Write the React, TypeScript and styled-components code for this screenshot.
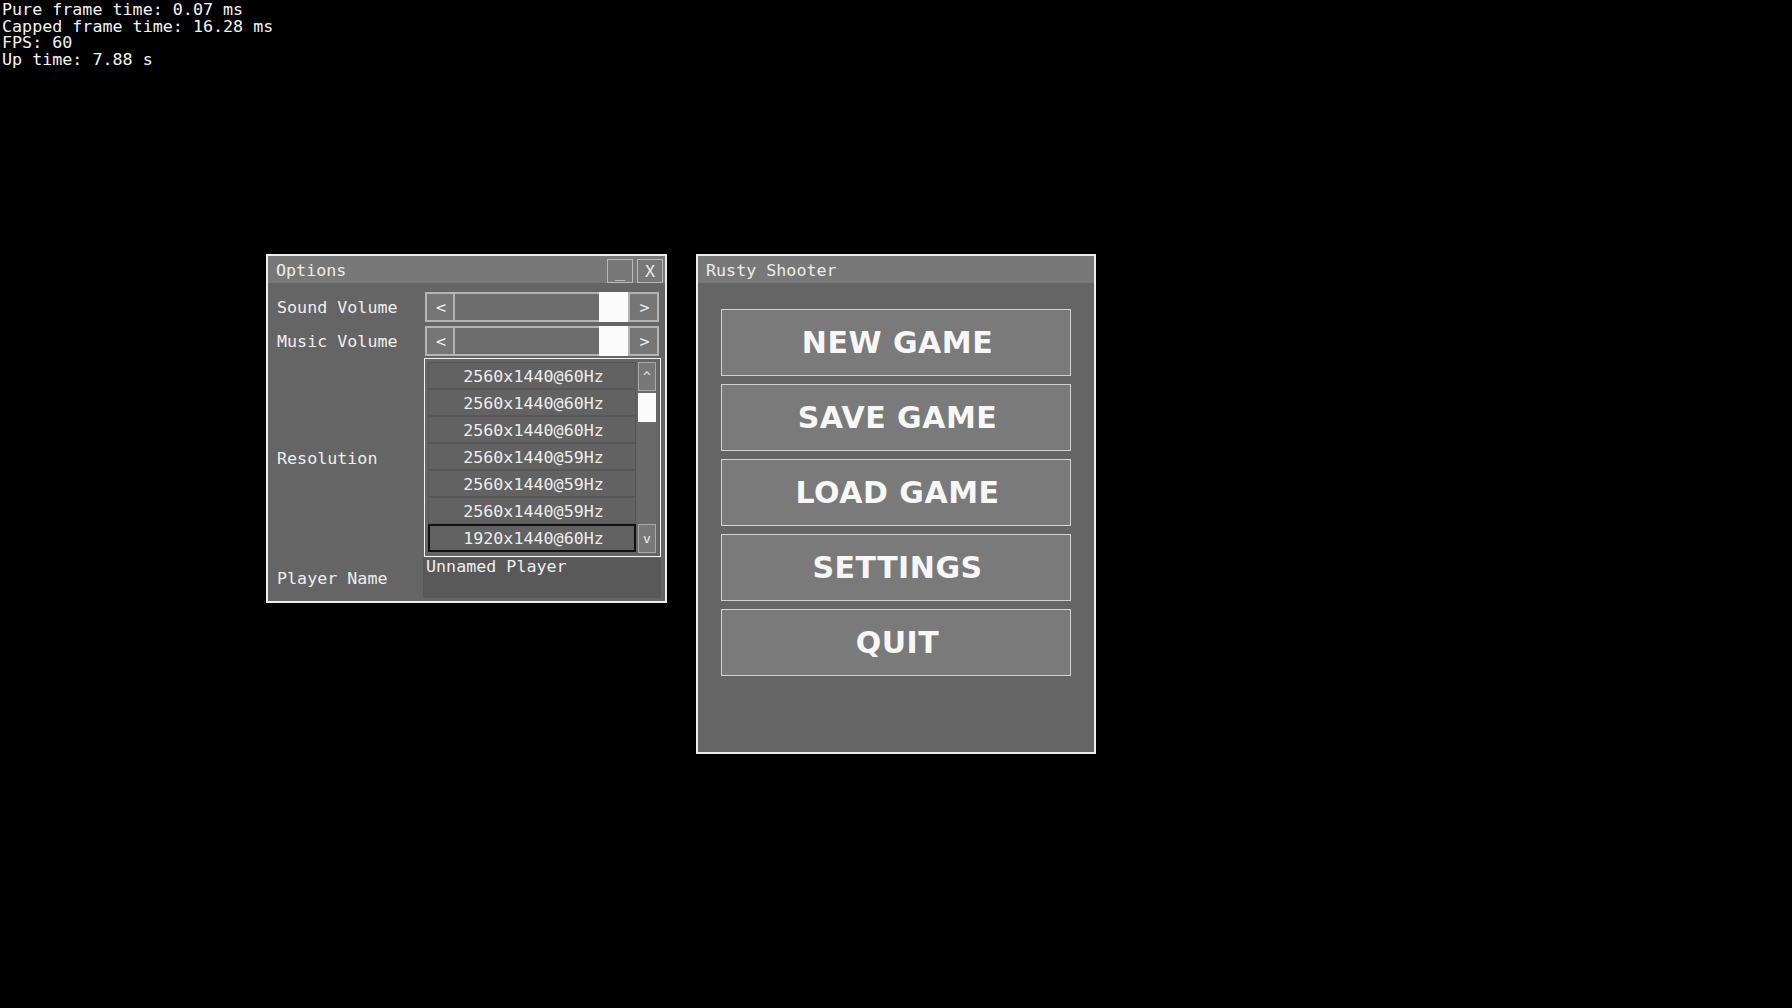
import React from 'react';
import styled, { createGlobalStyle } from 'styled-components';

const Global = createGlobalStyle`
  html, body { margin: 0; padding: 0; background: #000; }
  body {
    width: 1792px;
    height: 1008px;
    overflow: hidden;
    font-family: "DejaVu Sans Mono", "Liberation Mono", monospace;
  }
`;

const Desktop = styled.div`
  position: relative;
  width: 1792px;
  height: 1008px;
  background: #000;
`;

const Stats = styled.div`
  padding: 1px 0 0 2px;
  color: #f4f4f4;
  font-size: 16.7px;
  line-height: 16.6px;
  white-space: pre;
`;

const Window = styled.div<{ $x: number; $y: number; $w: number; $h: number }>`
  position: absolute;
  left: ${(p) => p.$x}px;
  top: ${(p) => p.$y}px;
  width: ${(p) => p.$w}px;
  height: ${(p) => p.$h}px;
  box-sizing: border-box;
  border: 2px solid #ededed;
  background: #656565;
  display: flex;
  flex-direction: column;
`;

const TitleBar = styled.div`
  height: 27px;
  flex-shrink: 0;
  background: #787878;
  display: flex;
  align-items: center;
  padding: 0 2px 0 8px;
  color: #ececec;
  font-size: 16.7px;
`;

const Title = styled.span`
  flex: 1;
`;

const TitleButton = styled.div`
  width: 26px;
  height: 24px;
  margin: 2px 0 0 4px;
  box-sizing: border-box;
  border: 1px solid #b8b8b8;
  display: flex;
  align-items: center;
  justify-content: center;
  color: #ececec;
  font-size: 16.7px;
`;

const OptionsBody = styled.div`
  flex: 1;
  display: flex;
  flex-direction: column;
  padding: 9px 4px 3px 9px;
`;

const Row = styled.div<{ $mt?: number }>`
  display: flex;
  align-items: center;
  margin-top: ${(p) => p.$mt ?? 0}px;
`;

const Label = styled.div`
  width: 146px;
  flex-shrink: 0;
  color: #efefef;
  font-size: 16.7px;
`;

const Slider = styled.div`
  display: flex;
  width: 234px;
  height: 30px;
  margin-left: 2px;
`;

const ArrowButton = styled.div<{ $w: number }>`
  width: ${(p) => p.$w}px;
  box-sizing: border-box;
  border: 2px solid #b4b4b4;
  background: #767676;
  display: flex;
  align-items: center;
  justify-content: center;
  padding-left: 2px;
  color: #efefef;
  font-size: 16.7px;
`;

const Track = styled.div`
  flex: 1;
  display: flex;
  justify-content: flex-end;
  box-sizing: border-box;
  border-top: 2px solid #b4b4b4;
  border-bottom: 2px solid #b4b4b4;
  background: #6d6d6d;
`;

const Thumb = styled.div`
  width: 29px;
  margin: -2px 0;
  background: #fbfbfb;
`;

const ListBox = styled.div`
  width: 237px;
  height: 199px;
  margin-left: 1px;
  box-sizing: border-box;
  border: 1px solid #f4f4f4;
  padding: 3px 4px 3px 3px;
  display: flex;
  gap: 2px;
`;

const Items = styled.div`
  width: 208px;
  display: flex;
  flex-direction: column;
`;

const Item = styled.div<{ $selected?: boolean }>`
  height: ${(p) => (p.$selected ? 28 : 27)}px;
  box-sizing: border-box;
  border: ${(p) => (p.$selected ? '2px solid #111' : '1px solid #575757')};
  background: #626262;
  display: flex;
  align-items: center;
  justify-content: center;
  padding-left: 3px;
  color: #ededed;
  font-size: 16.7px;
`;

const ScrollBar = styled.div`
  width: 18px;
  display: flex;
  flex-direction: column;
`;

const ScrollButton = styled.div`
  height: 29px;
  flex-shrink: 0;
  box-sizing: border-box;
  border: 1px solid #a9a9a9;
  background: #787878;
  display: flex;
  align-items: center;
  justify-content: center;
  color: #eeeeee;
  font-size: 13px;
`;

const ScrollTrack = styled.div`
  flex: 1;
  background: #6a6a6a;
  padding-top: 2px;
`;

const ScrollThumb = styled.div`
  height: 29px;
  background: #fbfbfb;
`;

const TextBox = styled.div`
  width: 238px;
  height: 40px;
  box-sizing: border-box;
  background: #595959;
  padding: 0 2px 0 3px;
  color: #efefef;
  font-size: 16.7px;
  line-height: 17px;
`;

const MenuBody = styled.div`
  flex: 1;
  display: flex;
  flex-direction: column;
  gap: 8px;
  padding: 26px 0 0 23px;
`;

const MenuButton = styled.div`
  width: 350px;
  height: 67px;
  box-sizing: border-box;
  border: 1px solid #d2d2d2;
  background: #7a7a7a;
  display: flex;
  align-items: center;
  justify-content: center;
  padding-left: 3px;
  color: #f7f7f7;
  font-family: "DejaVu Sans", "Liberation Sans", sans-serif;
  font-weight: 700;
  font-size: 30px;
  letter-spacing: 0.5px;
`;

const resolutions = [
  '2560x1440@60Hz',
  '2560x1440@60Hz',
  '2560x1440@60Hz',
  '2560x1440@59Hz',
  '2560x1440@59Hz',
  '2560x1440@59Hz',
  '1920x1440@60Hz',
];

const VolumeSlider = () => (
  <Slider>
    <ArrowButton $w={30}>&lt;</ArrowButton>
    <Track>
      <Thumb />
    </Track>
    <ArrowButton $w={31}>&gt;</ArrowButton>
  </Slider>
);

export default function App() {
  return (
    <Desktop>
      <Global />
      <Stats>
        {'Pure frame time: 0.07 ms\nCapped frame time: 16.28 ms\nFPS: 60\nUp time: 7.88 s'}
      </Stats>

      <Window $x={266} $y={254} $w={401} $h={349}>
        <TitleBar>
          <Title>Options</Title>
          <TitleButton>_</TitleButton>
          <TitleButton>X</TitleButton>
        </TitleBar>
        <OptionsBody>
          <Row>
            <Label>Sound Volume</Label>
            <VolumeSlider />
          </Row>
          <Row $mt={4}>
            <Label>Music Volume</Label>
            <VolumeSlider />
          </Row>
          <Row $mt={2}>
            <Label>Resolution</Label>
            <ListBox>
              <Items>
                {resolutions.map((r, i) => (
                  <Item key={i} $selected={i === resolutions.length - 1}>
                    {r}
                  </Item>
                ))}
              </Items>
              <ScrollBar>
                <ScrollButton>^</ScrollButton>
                <ScrollTrack>
                  <ScrollThumb />
                </ScrollTrack>
                <ScrollButton>v</ScrollButton>
              </ScrollBar>
            </ListBox>
          </Row>
          <Row $mt={1}>
            <Label>Player Name</Label>
            <TextBox>Unnamed Player</TextBox>
          </Row>
        </OptionsBody>
      </Window>

      <Window $x={696} $y={254} $w={400} $h={500}>
        <TitleBar>
          <Title>Rusty Shooter</Title>
        </TitleBar>
        <MenuBody>
          <MenuButton>NEW GAME</MenuButton>
          <MenuButton>SAVE GAME</MenuButton>
          <MenuButton>LOAD GAME</MenuButton>
          <MenuButton>SETTINGS</MenuButton>
          <MenuButton>QUIT</MenuButton>
        </MenuBody>
      </Window>
    </Desktop>
  );
}
